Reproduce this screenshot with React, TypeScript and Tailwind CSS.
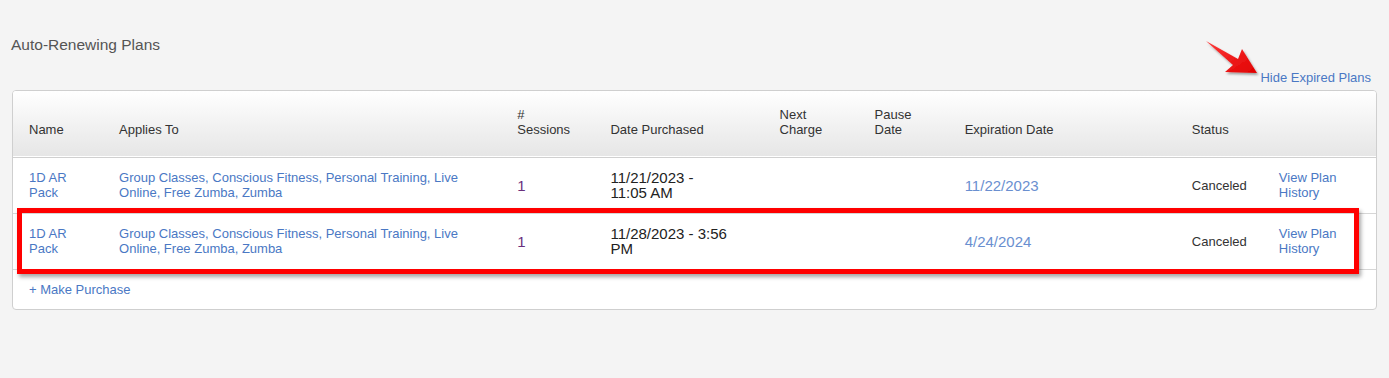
import React from "react";

const font = { fontFamily: '"Liberation Sans", Arial, sans-serif' };

function Arrow() {
  return (
    <svg
      className="absolute left-[1198px] top-[32px]"
      width="68"
      height="50"
      viewBox="0 0 68 50"
    >
      <defs>
        <linearGradient id="ar" x1="0" y1="0" x2="1" y2="1">
          <stop offset="0" stopColor="#ff3a3a" />
          <stop offset="1" stopColor="#e00000" />
        </linearGradient>
        <filter id="sh" x="-20%" y="-20%" width="150%" height="150%">
          <feDropShadow dx="1.5" dy="2" stdDeviation="1.2" floodColor="#000" floodOpacity="0.35" />
        </filter>
      </defs>
      <polygon
        points="8,9 40,27 44,17 59,41 27,40 35,33"
        fill="url(#ar)"
        filter="url(#sh)"
      />
    </svg>
  );
}

const headers: { lines: string[]; w: number }[] = [
  { lines: ["Name"], w: 90 },
  { lines: ["Applies To"], w: 398 },
  { lines: ["#", "Sessions"], w: 93 },
  { lines: ["Date Purchased"], w: 169 },
  { lines: ["Next", "Charge"], w: 95 },
  { lines: ["Pause", "Date"], w: 90 },
  { lines: ["Expiration Date"], w: 227 },
  { lines: ["Status"], w: 87 },
  { lines: [""], w: 113 },
];

const rows = [
  { date: ["11/21/2023 -", "11:05 AM"], exp: "11/22/2023" },
  { date: ["11/28/2023 - 3:56", "PM"], exp: "4/24/2024" },
];

export default function App() {
  return (
    <div className="relative h-[378px] w-[1389px] bg-[#f4f4f4]" style={font}>
      <div className="px-[11px] pt-[36px]">
        <h2 className="text-[15.5px] leading-[18px] font-normal text-[#555]">Auto-Renewing Plans</h2>
        <div className="mt-[16px] flex justify-end pr-[7px]">
          <a className="text-[13px] leading-[16px] text-[#4a78c4]">Hide Expired Plans</a>
        </div>
        <div className="relative mt-[4px] ml-[1px] w-[1365px] overflow-hidden rounded-[4px] border border-[#cfcfcf] bg-white">
          <table className="w-full table-fixed border-collapse text-[13px] leading-[15px]">
            <colgroup>
              {headers.map((h, i) => (
                <col key={i} style={{ width: h.w }} />
              ))}
            </colgroup>
            <thead>
              <tr className="h-[66px] border-b border-[#d0d0d0] bg-gradient-to-b from-white to-[#e6e6e6]">
                {headers.map((h, i) => (
                  <th
                    key={i}
                    className="pb-[20px] pl-4 text-left align-bottom font-normal text-[#333]"
                  >
                    {h.lines.map((l, j) => (
                      <div key={j}>{l}</div>
                    ))}
                  </th>
                ))}
              </tr>
            </thead>
            <tbody>
              {rows.map((r, i) => (
                <tr key={i} className="h-[56px] border-b border-[#d6d6d6]">
                  <td className="pl-4 pr-6 align-middle text-[#4a78c4]">
                    <div>1D AR</div>
                    <div>Pack</div>
                  </td>
                  <td className="pl-4 align-middle text-[#4a78c4]">
                    <div>Group Classes, Conscious Fitness, Personal Training, Live</div>
                    <div>Online, Free Zumba, Zumba</div>
                  </td>
                  <td className="pl-4 align-middle text-[15px] text-[#6a2f7c]">1</td>
                  <td className="pl-4 align-middle text-[15px] leading-[15px] text-[#222]">
                    {r.date.map((d, j) => (
                      <div key={j}>{d}</div>
                    ))}
                  </td>
                  <td />
                  <td />
                  <td className="pl-4 align-middle text-[15px] text-[#6a8fd0]">{r.exp}</td>
                  <td className="pl-4 align-middle text-[#333]">Canceled</td>
                  <td className="pl-4 align-middle text-[#4a78c4]">
                    <div>View Plan</div>
                    <div>History</div>
                  </td>
                </tr>
              ))}
              <tr className="h-[40px]">
                <td colSpan={9} className="pl-4 align-middle text-[#4a78c4]">
                  + Make Purchase
                </td>
              </tr>
            </tbody>
          </table>
          <div className="pointer-events-none absolute left-[4px] top-[117px] h-[66px] w-[1342px] border-[5px] border-[#ff0000] shadow-[2px_3px_4px_rgba(0,0,0,0.35)]" />
        </div>
      </div>
      <Arrow />
    </div>
  );
}
